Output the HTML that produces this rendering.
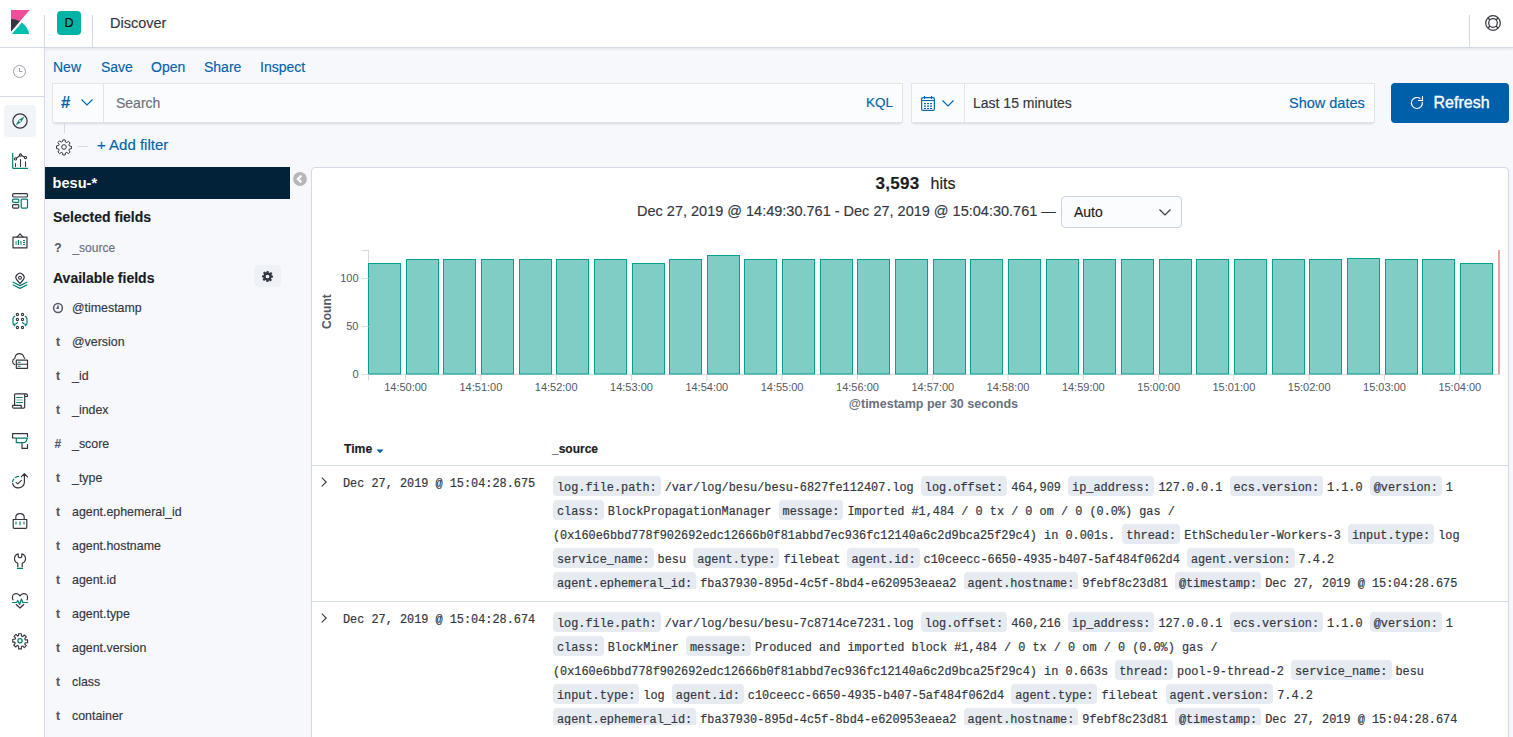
<!DOCTYPE html>
<html><head><meta charset="utf-8">
<style>
*{box-sizing:border-box;margin:0;padding:0}
html,body{width:1513px;height:737px;overflow:hidden}
body{position:relative;background:#F7F8FC;font-family:"Liberation Sans",sans-serif;color:#343741}
.a{position:absolute;white-space:nowrap}
.t{position:absolute;white-space:nowrap;line-height:20px;height:20px;-webkit-text-stroke-width:.15px}
.link{color:#0063AA}
svg{position:absolute;overflow:visible}
.mono{font-family:"Liberation Mono",monospace;font-size:11.87px;color:#343741;white-space:pre;-webkit-text-stroke:.2px #343741}
.src{height:112.7px;overflow:hidden;line-height:24px}
.ln{height:24px;white-space:pre}
.dt{background:#E6EBF2;border-radius:4px;padding:5px 4px 1px 4px;margin-right:4px}
</style></head><body>

<!-- HEADER -->
<div class="a" style="left:0;top:0;width:1513px;height:48px;background:#fff;border-bottom:1px solid #D3DAE6;box-shadow:0 1px 3px rgba(152,162,179,.25)"></div>
<svg style="left:8px;top:10px" width="24" height="24" viewBox="0 0 32 32"><path fill="#F04E98" d="M4 0v28.789L28.935.017z"/><path fill="#343741" d="M4 12v16.789l11.906-13.738A24.721 24.721 0 004 12"/><path fill="#00BFB3" d="M18.479 16.664L6.268 30.754l-1.073 1.237h23.191c-1.252-6.292-4.883-11.719-9.908-15.327"/></svg>
<div class="a" style="left:44px;top:15px;width:1px;height:33px;background:#D3DAE6"></div>
<div class="a" style="left:92px;top:15px;width:1px;height:33px;background:#D3DAE6"></div>
<div class="a" style="left:57px;top:11px;width:24px;height:24px;border-radius:4px;background:#00B3A4;color:#000;font-size:12.5px;line-height:24px;text-align:center;-webkit-text-stroke:.2px #000">D</div>
<div class="t" id="disc" style="left:110px;top:13px;font-size:14.5px;color:#343741">Discover</div>
<div class="a" style="left:1469px;top:15px;width:1px;height:33px;background:#D3DAE6"></div>
<svg style="left:1485px;top:15px" width="16" height="16" viewBox="0 0 16 16"><g fill="none" stroke="#343741" stroke-width="1.2"><circle cx="8" cy="8" r="7.3"/><circle cx="8" cy="8" r="4.3"/><path d="M3 3l2 2M13 3l-2 2M3 13l2-2M13 13l-2-2"/></g></svg>

<!-- LEFT NAV -->
<div class="a" style="left:0;top:48px;width:45px;height:689px;background:#fff;border-right:1px solid #D3DAE6"></div>
<svg style="left:13px;top:65px" width="13" height="13" viewBox="0 0 13 13"><g fill="none" stroke="#98A2B3" stroke-width="1"><circle cx="6.5" cy="6.5" r="6"/><path d="M6.5 3v3.5H9.5"/></g></svg>
<div class="a" style="left:0;top:96px;width:44px;height:1px;background:#D3DAE6"></div>
<div class="a" style="left:4px;top:105px;width:32px;height:32px;border-radius:4px;background:#F1F4F9"></div>
<svg style="left:12px;top:113px" width="16" height="16" viewBox="0 0 16 16"><g fill="none" stroke-width="1.1" stroke-linecap="round" stroke-linejoin="round"><circle cx="8" cy="8" r="7.1" stroke="#343741" stroke-width="1.25"/><path d="M11.6 4.4L8.9 8.9 4.4 11.6 7.1 7.1z" fill="#017D73" stroke="#017D73" stroke-width="0.6"/><circle cx="8" cy="8" r="0.95" fill="#F1F4F9" stroke="none"/></g></svg>
<svg style="left:12px;top:153px" width="16" height="16" viewBox="0 0 16 16"><g fill="none" stroke-width="1.1" stroke-linecap="round" stroke-linejoin="round"><path d="M0.7 0.3V14.4c0 .5.4.9.9.9H15.6" stroke="#017D73" stroke-width="1.2"/><path d="M3.5 10.5v3M8.5 6.5v7M13.5 8.7v4.8" stroke="#343741"/><path d="M4.4 5.2L7.6 2.7M9.5 2.5L12.5 4" stroke="#343741"/><circle cx="3.5" cy="5.9" r="1.1" stroke="#343741"/><circle cx="8.5" cy="2" r="1.1" stroke="#343741"/><circle cx="13.5" cy="4.6" r="1.1" stroke="#343741"/></g></svg>
<svg style="left:12px;top:193px" width="16" height="16" viewBox="0 0 16 16"><g fill="none" stroke-width="1.1" stroke-linecap="round" stroke-linejoin="round"><rect x="0.6" y="0.6" width="14.9" height="3.4" rx="1" stroke="#343741" stroke-width="1.2"/><rect x="0.6" y="6.1" width="6.2" height="3.3" rx="1" stroke="#017D73" stroke-width="1.2"/><rect x="0.6" y="11.6" width="6.2" height="3.5" rx="1" stroke="#343741" stroke-width="1.2"/><rect x="9.2" y="6.1" width="6.3" height="9" rx="1" stroke="#017D73" stroke-width="1.2"/></g></svg>
<svg style="left:12px;top:233px" width="16" height="16" viewBox="0 0 16 16"><g fill="none" stroke-width="1.1" stroke-linecap="round" stroke-linejoin="round"><path d="M1 4.1h14v10.8H1z" stroke="#343741" stroke-width="1.2"/><path d="M5 4.1L8 0.8l3 3.3" stroke="#343741" stroke-width="1.2"/><g fill="#017D73" stroke="none"><rect x="3.3" y="8" width="1.6" height="4" opacity=".55"/><rect x="5.8" y="6.9" width="1.2" height="5.1"/><rect x="8.1" y="8" width="1.7" height="4" opacity=".55"/><rect x="11" y="7" width="2" height="1"/><rect x="11" y="9" width="2" height="1"/><rect x="11" y="11" width="2" height="1"/></g></g></svg>
<svg style="left:12px;top:273px" width="16" height="16" viewBox="0 0 16 16"><g fill="none" stroke-width="1.1" stroke-linecap="round" stroke-linejoin="round"><path d="M8 10.6L5 7A4 4 0 1 1 11 7z" stroke="#343741" stroke-width="1.2"/><circle cx="8" cy="4.7" r="1.4" stroke="#343741" stroke-width="1.1"/><path d="M1.2 9.2L8 12.6l6.8-3.4M1.2 12L8 15.4l6.8-3.4" stroke="#017D73" stroke-width="1.2"/></g></svg>
<svg style="left:12px;top:313px" width="16" height="16" viewBox="0 0 16 16"><g fill="none" stroke-width="1.1" stroke-linecap="round" stroke-linejoin="round"><circle cx="5.4" cy="1.5" r="1.1" stroke="#343741" stroke-width="1.1"/><circle cx="5.4" cy="6.5" r="1.1" stroke="#343741" stroke-width="1.1"/><circle cx="5.4" cy="14.5" r="1.1" stroke="#343741" stroke-width="1.1"/><circle cx="10.5" cy="1.5" r="1.1" stroke="#343741" stroke-width="1.1"/><circle cx="10.5" cy="6.5" r="1.1" stroke="#343741" stroke-width="1.1"/><circle cx="10.5" cy="14.5" r="1.1" stroke="#343741" stroke-width="1.1"/><path d="M2.7 3.3C1.6 3.9 1 4.8 1 6v4.3c0 .8.5 1.1 1.2 1.1 1.5 0 2.7-.6 3.3-1.8M1.3 11.2l1.4 1.3M13.3 3.3c1.1.6 1.7 1.5 1.7 2.7v4.3c0 .8-.5 1.1-1.2 1.1-1.5 0-2.7-.6-3.3-1.8M14.7 11.2l-1.4 1.3" stroke="#017D73" stroke-width="1.2"/></g></svg>
<svg style="left:12px;top:353px" width="16" height="16" viewBox="0 0 16 16"><g fill="none" stroke-width="1.1" stroke-linecap="round" stroke-linejoin="round"><path d="M2.7 11.6C1.4 11 .6 9.9 .6 8.5c0-1.5 1-2.6 2.2-3C3.1 2.7 5.1.6 7.6.6c2 0 3.6 1.3 4.2 3.2.2.6.5 1.1.9 1.6" stroke="#343741"/><rect x="4.3" y="7.2" width="11.2" height="8.2" rx=".4" stroke="#343741" stroke-width="1.2"/><path d="M4.3 11.3h11.2" stroke="#343741"/><path d="M6.2 9.3h2M6.2 13.3h2" stroke="#017D73" stroke-width="1.1"/></g></svg>
<svg style="left:12px;top:393px" width="16" height="16" viewBox="0 0 16 16"><g fill="none" stroke-width="1.1" stroke-linecap="round" stroke-linejoin="round"><path d="M2.6 12.3V2c0-.6.4-1.1 1-1.1h10.6c.7 0 1.2.5 1.2 1.1v1.5h-2.7M12.7 1v13c0 .7-.5 1.2-1.1 1.2H1.7c-.6 0-1.1-.5-1.1-1.1v-1.7h8.6v2.8" stroke="#343741" stroke-width="1.2"/><path d="M4.6 4.5h5.8M4.6 9.5h5.8" stroke="#017D73" stroke-width="1"/><path d="M4.6 7h5.8" stroke="#017D73" stroke-width="1" opacity=".55"/></g></svg>
<svg style="left:12px;top:433px" width="16" height="16" viewBox="0 0 16 16"><g fill="none" stroke-width="1.1" stroke-linecap="round" stroke-linejoin="round"><path d="M3.8 5H.6V.6h14.9v3" stroke="#343741" stroke-width="1.2"/><path d="M4.3 5.2h11.1l-1.1 2.9c-.5 1-1.5 1.6-2.6 1.6H4.3z" stroke="#017D73" stroke-width="1.2"/><path d="M10 10.6v4.8h5.5v-3.7" stroke="#343741" stroke-width="1.2"/></g></svg>
<svg style="left:12px;top:473px" width="16" height="16" viewBox="0 0 16 16"><g fill="none" stroke-width="1.1" stroke-linecap="round" stroke-linejoin="round"><path d="M.6 10.3A6 6 0 0 0 12.4 9.3V.8M9.3 3.8l3.1-3.1 3.1 3.1" stroke="#343741" stroke-width="1.2"/><path d="M4.1 9.3l1.7 1.6 3.6-3.5" stroke="#343741"/><path d="M3.3 4.4C4.3 3.7 5.5 3.4 6.7 3.3M.6 8.6C.8 7.6 1.2 6.8 1.8 6.1" stroke="#017D73" stroke-width="1.2"/></g></svg>
<svg style="left:12px;top:513px" width="16" height="16" viewBox="0 0 16 16"><g fill="none" stroke-width="1.1" stroke-linecap="round" stroke-linejoin="round"><path d="M3.8 5.5V4.3C3.8 2.1 5.7.6 8 .6s4.2 1.5 4.2 3.7v1.2" stroke="#343741" stroke-width="1.2"/><path d="M1.2 6.5h13.6v7.8c0 .6-.4 1-1 1H2.2c-.6 0-1-.4-1-1z" stroke="#343741" stroke-width="1.2"/><path d="M4 9v1.8M12 9v1.8" stroke="#017D73" stroke-width="1.2"/><path d="M8 9.2v2.2" stroke="#017D73" stroke-width="2" opacity=".6"/></g></svg>
<svg style="left:12px;top:553px" width="16" height="16" viewBox="0 0 16 16"><g fill="none" stroke-width="1.1" stroke-linecap="round" stroke-linejoin="round"><path d="M6.2.9C4 1.5 2.5 3.4 2.5 5.7c0 2 1.2 3.7 3.3 4.5v3.6M9.8.9C12 1.5 13.5 3.4 13.5 5.7c0 2-1.2 3.7-3.3 4.5v3.6M6.2.9v2.4c0 .8.6 1.4 1.4 1.4h.8c.8 0 1.4-.6 1.4-1.4V.9" stroke="#343741" stroke-width="1.2"/><path d="M5.4 15.4h5.2" stroke="#017D73" stroke-width="1.2"/></g></svg>
<svg style="left:12px;top:593px" width="16" height="16" viewBox="0 0 16 16"><g fill="none" stroke-width="1.1" stroke-linecap="round" stroke-linejoin="round"><path d="M1 6.8C.5 6 .4 5.2.4 4.5.4 2.3 2.1.6 4.2.6c1.6 0 3 .9 3.8 2.3C8.8 1.5 10.2.6 11.8.6c2.1 0 3.8 1.7 3.8 3.9 0 .7-.1 1.5-.6 2.3M4.3 11.5L8 15l3.7-3.5" stroke="#343741" stroke-width="1.2"/><path d="M.4 9.5h4.2l1.2-2 1.8 4 1.7-5.4 1.5 3.4h4.8" stroke="#017D73" stroke-width="1.2"/></g></svg>
<svg style="left:12px;top:633px" width="16" height="16" viewBox="0 0 16 16"><g fill="none" stroke-width="1.1" stroke-linecap="round" stroke-linejoin="round"><path d="M6.6.7h2.8v2.3l1.3.6 1.6-1.6 2 2-1.6 1.6.6 1.3h2.3v2.8h-2.3l-.6 1.3 1.6 1.6-2 2-1.6-1.6-1.3.6v2.3H6.6V13l-1.3-.6-1.6 1.6-2-2 1.6-1.6-.6-1.3H.7V6.3H3l.6-1.3L2 3.4l2-2 1.6 1.6 1-.4z" stroke="#343741" stroke-width="1.1"/><circle cx="8" cy="7.7" r="2.1" stroke="#017D73" stroke-width="1.3"/></g></svg>

<!-- TOP MENU -->
<div class="t link" style="left:53px;top:57px;font-size:14px">New</div>
<div class="t link" style="left:101px;top:57px;font-size:14px">Save</div>
<div class="t link" style="left:151px;top:57px;font-size:14px">Open</div>
<div class="t link" style="left:204px;top:57px;font-size:14px">Share</div>
<div class="t link" style="left:260px;top:57px;font-size:14px">Inspect</div>

<!-- QUERY BAR -->
<div class="a" style="left:52px;top:83px;width:851px;height:40px;background:#FBFCFD;box-shadow:inset 0 0 0 1px rgba(16,22,26,.1),0 1px 1px -1px rgba(152,162,179,.3),0 3px 2px -2px rgba(152,162,179,.3)"></div>
<div class="a" style="left:103px;top:84px;width:1px;height:38px;background:rgba(16,22,26,.1)"></div>
<div class="t link" style="left:61px;top:92.1px;font-size:16.5px;font-weight:bold">#</div>
<svg style="left:81px;top:99px" width="12" height="7" viewBox="0 0 12 7"><path d="M0.5 0.5L6 6L11.5 0.5" fill="none" stroke="#006BB4" stroke-width="1.2"/></svg>
<div class="t" style="left:116px;top:93px;font-size:14px;color:#69707D">Search</div>
<div class="t link" style="left:866px;top:93px;font-size:13.5px">KQL</div>

<!-- DATE PICKER -->
<div class="a" style="left:911px;top:83px;width:464px;height:40px;background:#FBFCFD;box-shadow:inset 0 0 0 1px rgba(16,22,26,.1),0 1px 1px -1px rgba(152,162,179,.3),0 3px 2px -2px rgba(152,162,179,.3)"></div>
<div class="a" style="left:964px;top:84px;width:1px;height:38px;background:rgba(16,22,26,.1)"></div>
<svg style="left:921px;top:96px" width="14" height="15" viewBox="0 0 14 15"><g fill="none" stroke="#006BB4" stroke-width="1.2"><rect x="0.6" y="1.6" width="12.8" height="12.8" rx="1.5"/><path d="M3.5 0v3M10.5 0v3M0.6 4.5h12.8"/></g><g fill="#006BB4"><rect x="3" y="7" width="2" height="1.2"/><rect x="6" y="7" width="2" height="1.2"/><rect x="9" y="7" width="2" height="1.2"/><rect x="3" y="9.5" width="2" height="1.2"/><rect x="6" y="9.5" width="2" height="1.2"/><rect x="9" y="9.5" width="2" height="1.2"/><rect x="3" y="12" width="2" height="1"/><rect x="6" y="12" width="2" height="1"/><rect x="9" y="12" width="2" height="1"/></g></svg>
<svg style="left:942px;top:100px" width="12" height="7" viewBox="0 0 12 7"><path d="M0.5 0.5L6 6L11.5 0.5" fill="none" stroke="#006BB4" stroke-width="1.2"/></svg>
<div class="t" style="left:973px;top:93px;font-size:14px;color:#343741">Last 15 minutes</div>
<div class="t link" style="left:1289px;top:93px;font-size:14.5px">Show dates</div>

<!-- REFRESH -->
<div class="a" style="left:1391px;top:83px;width:118px;height:40px;border-radius:4px;background:#005FA9"></div>
<svg style="left:1411px;top:96px" width="13" height="13" viewBox="0 0 13 13"><g fill="none" stroke="#fff" stroke-width="1.15"><path d="M9.44 2.79A5.5 5.5 0 1 0 11.28 5.86"/><path d="M11.5 0v4.5H7"/></g></svg>
<div class="t" style="left:1433.5px;top:92.5px;font-size:16px;color:#fff;-webkit-text-stroke:.35px #fff">Refresh</div>

<!-- FILTER ROW -->
<div class="a" style="left:64px;top:123px;width:1px;height:10px;background:#D3DAE6"></div>
<svg style="left:56px;top:139px" width="16" height="16" viewBox="0 0 16 16"><path fill="none" stroke="#343741" stroke-width="1" d="M6.9 0.9h2.2l.4 2.1 1.2.6 1.8-1.2 1.6 1.6-1.2 1.8.5 1.2 2.1.4v2.2l-2.1.4-.5 1.2 1.2 1.8-1.6 1.6-1.8-1.2-1.2.5-.4 2.1H6.9l-.4-2.1-1.2-.5-1.8 1.2-1.6-1.6 1.2-1.8-.5-1.2-2.1-.4V6.9l2.1-.4.5-1.2-1.2-1.8 1.6-1.6 1.8 1.2 1.2-.6z"/><circle cx="8" cy="8" r="2.3" fill="none" stroke="#343741" stroke-width="1"/></svg>
<div class="a" style="left:78px;top:146px;width:10px;height:1px;background:#D3DAE6"></div>
<div class="t link" style="left:97px;top:135px;font-size:15px">+ Add filter</div>

<div class="a" style="left:45px;top:167px;width:245px;height:32px;background:#012238"></div>
<div class="t" style="left:52.5px;top:172.8px;font-size:14.6px;font-weight:bold;color:#fff;-webkit-text-stroke-width:0">besu-*</div>
<svg style="left:293px;top:172px" width="14" height="14" viewBox="0 0 14 14"><circle cx="7" cy="7" r="6.9" fill="#B7B7B7"/><path d="M8.3 3.6L4.9 7l3.4 3.4" fill="none" stroke="#fff" stroke-width="2.2"/></svg>
<div class="t" style="left:53px;top:207px;font-size:14px;font-weight:bold;color:#1a1c21">Selected fields</div>
<div class="t" style="left:54.3px;top:238px;font-size:12px;font-weight:bold;color:#535966">?</div>
<div class="t" style="left:72.4px;top:238px;font-size:12px;color:#69707D">_source</div>
<div class="t" style="left:53px;top:267.5px;font-size:14px;font-weight:bold;color:#1a1c21">Available fields</div>
<div class="a" style="left:254px;top:265px;width:27px;height:22px;border-radius:4px;background:#EEF1F5"></div>
<svg style="left:262px;top:271px" width="11" height="11" viewBox="0 0 16 16"><path fill="#343741" d="M6.5 0h3l.4 2.3 1.3.6L13.1 1.5l2.1 2.1-1.4 1.9.6 1.3L16 6.5v3l-2.3.4-.6 1.3 1.4 1.9-2.1 2.1-1.9-1.4-1.3.6L9.5 16h-3l-.4-2.3-1.3-.6-1.9 1.4L.8 12.4l1.4-1.9-.6-1.3L0 9.5v-3l2.3-.4.6-1.3L1.5 2.9 3.6.8l1.9 1.4 1.3-.6zM8 5.3A2.7 2.7 0 1 0 8 10.7 2.7 2.7 0 1 0 8 5.3z"/></svg>
<svg style="left:53px;top:302.5px" width="10" height="10" viewBox="0 0 10 10"><g fill="none" stroke="#535966" stroke-width="1.5"><circle cx="5" cy="5" r="4.4"/><path d="M5 2.4V5.3H3.4"/></g></svg>
<div class="t" style="left:72px;top:297.70px;font-size:12.4px;color:#343741">@timestamp</div>
<div class="t" style="left:56px;top:331.84px;font-size:12px;font-weight:bold;color:#535966">t</div>
<div class="t" style="left:72px;top:331.70px;font-size:12.4px;color:#343741">@version</div>
<div class="t" style="left:56px;top:365.84px;font-size:12px;font-weight:bold;color:#535966">t</div>
<div class="t" style="left:72px;top:365.70px;font-size:12.4px;color:#343741">_id</div>
<div class="t" style="left:56px;top:399.84px;font-size:12px;font-weight:bold;color:#535966">t</div>
<div class="t" style="left:72px;top:399.70px;font-size:12.4px;color:#343741">_index</div>
<div class="t" style="left:54.5px;top:433.84px;font-size:12px;font-weight:bold;color:#535966">#</div>
<div class="t" style="left:72px;top:433.70px;font-size:12.4px;color:#343741">_score</div>
<div class="t" style="left:56px;top:467.84px;font-size:12px;font-weight:bold;color:#535966">t</div>
<div class="t" style="left:72px;top:467.70px;font-size:12.4px;color:#343741">_type</div>
<div class="t" style="left:56px;top:501.84px;font-size:12px;font-weight:bold;color:#535966">t</div>
<div class="t" style="left:72px;top:501.70px;font-size:12.4px;color:#343741">agent.ephemeral_id</div>
<div class="t" style="left:56px;top:535.84px;font-size:12px;font-weight:bold;color:#535966">t</div>
<div class="t" style="left:72px;top:535.70px;font-size:12.4px;color:#343741">agent.hostname</div>
<div class="t" style="left:56px;top:569.84px;font-size:12px;font-weight:bold;color:#535966">t</div>
<div class="t" style="left:72px;top:569.70px;font-size:12.4px;color:#343741">agent.id</div>
<div class="t" style="left:56px;top:603.84px;font-size:12px;font-weight:bold;color:#535966">t</div>
<div class="t" style="left:72px;top:603.70px;font-size:12.4px;color:#343741">agent.type</div>
<div class="t" style="left:56px;top:637.84px;font-size:12px;font-weight:bold;color:#535966">t</div>
<div class="t" style="left:72px;top:637.70px;font-size:12.4px;color:#343741">agent.version</div>
<div class="t" style="left:56px;top:671.84px;font-size:12px;font-weight:bold;color:#535966">t</div>
<div class="t" style="left:72px;top:671.70px;font-size:12.4px;color:#343741">class</div>
<div class="t" style="left:56px;top:705.84px;font-size:12px;font-weight:bold;color:#535966">t</div>
<div class="t" style="left:72px;top:705.70px;font-size:12.4px;color:#343741">container</div>
<div class="a" style="left:311px;top:167px;width:1198px;height:640px;background:#fff;border:1px solid #D3DAE6;border-radius:4px;box-shadow:0 1px 2px -1px rgba(152,162,179,.3),0 3px 3px -2px rgba(152,162,179,.2)"></div>
<div class="t" style="left:875.5px;top:173.8px;font-size:17px;font-weight:bold;color:#1a1c21;letter-spacing:.3px">3,593</div>
<div class="t" style="left:930.5px;top:174.2px;font-size:16px;color:#1a1c21">hits</div>
<div class="t" style="left:637px;top:201px;font-size:14.5px;color:#343741">Dec 27, 2019 @ 14:49:30.761 - Dec 27, 2019 @ 15:04:30.761 —</div>
<div class="a" style="left:1061px;top:196px;width:121px;height:32px;border-radius:4px;background:#FBFCFD;border:1px solid #CBD3DF"></div>
<div class="t" style="left:1074px;top:202px;font-size:14px;color:#1a1c21">Auto</div>
<svg style="left:1159px;top:209px" width="12" height="7" viewBox="0 0 12 7"><path d="M0.5 0.5L6 6L11.5 0.5" fill="none" stroke="#343741" stroke-width="1.2"/></svg>
<svg style="left:0;top:0" width="1513" height="737" viewBox="0 0 1513 737">
<path d="M368.5 250V374.5H1500" fill="none" stroke="#D9D9D9" stroke-width="1"/>
<rect x="368.5" y="263.5" width="32" height="110.5" fill="#80CDC5" stroke="#04A193" stroke-width="1"/>
<rect x="406.5" y="259.5" width="32" height="114.5" fill="#80CDC5" stroke="#04A193" stroke-width="1"/>
<rect x="443.5" y="259.5" width="32" height="114.5" fill="#80CDC5" stroke="#04A193" stroke-width="1"/>
<rect x="481.5" y="259.5" width="32" height="114.5" fill="#80CDC5" stroke="#04A193" stroke-width="1"/>
<rect x="519.5" y="259.5" width="32" height="114.5" fill="#80CDC5" stroke="#04A193" stroke-width="1"/>
<rect x="556.5" y="259.5" width="32" height="114.5" fill="#80CDC5" stroke="#04A193" stroke-width="1"/>
<rect x="594.5" y="259.5" width="32" height="114.5" fill="#80CDC5" stroke="#04A193" stroke-width="1"/>
<rect x="632.5" y="263.5" width="32" height="110.5" fill="#80CDC5" stroke="#04A193" stroke-width="1"/>
<rect x="669.5" y="259.5" width="32" height="114.5" fill="#80CDC5" stroke="#04A193" stroke-width="1"/>
<rect x="707.5" y="255.5" width="32" height="118.5" fill="#80CDC5" stroke="#04A193" stroke-width="1"/>
<rect x="744.5" y="259.5" width="32" height="114.5" fill="#80CDC5" stroke="#04A193" stroke-width="1"/>
<rect x="782.5" y="259.5" width="32" height="114.5" fill="#80CDC5" stroke="#04A193" stroke-width="1"/>
<rect x="820.5" y="259.5" width="32" height="114.5" fill="#80CDC5" stroke="#04A193" stroke-width="1"/>
<rect x="857.5" y="259.5" width="32" height="114.5" fill="#80CDC5" stroke="#04A193" stroke-width="1"/>
<rect x="895.5" y="259.5" width="32" height="114.5" fill="#80CDC5" stroke="#04A193" stroke-width="1"/>
<rect x="933.5" y="259.5" width="32" height="114.5" fill="#80CDC5" stroke="#04A193" stroke-width="1"/>
<rect x="970.5" y="259.5" width="32" height="114.5" fill="#80CDC5" stroke="#04A193" stroke-width="1"/>
<rect x="1008.5" y="259.5" width="32" height="114.5" fill="#80CDC5" stroke="#04A193" stroke-width="1"/>
<rect x="1046.5" y="259.5" width="32" height="114.5" fill="#80CDC5" stroke="#04A193" stroke-width="1"/>
<rect x="1083.5" y="259.5" width="32" height="114.5" fill="#80CDC5" stroke="#04A193" stroke-width="1"/>
<rect x="1121.5" y="259.5" width="32" height="114.5" fill="#80CDC5" stroke="#04A193" stroke-width="1"/>
<rect x="1159.5" y="259.5" width="32" height="114.5" fill="#80CDC5" stroke="#04A193" stroke-width="1"/>
<rect x="1196.5" y="259.5" width="32" height="114.5" fill="#80CDC5" stroke="#04A193" stroke-width="1"/>
<rect x="1234.5" y="259.5" width="32" height="114.5" fill="#80CDC5" stroke="#04A193" stroke-width="1"/>
<rect x="1272.5" y="259.5" width="32" height="114.5" fill="#80CDC5" stroke="#04A193" stroke-width="1"/>
<rect x="1309.5" y="259.5" width="32" height="114.5" fill="#80CDC5" stroke="#04A193" stroke-width="1"/>
<rect x="1347.5" y="258.5" width="32" height="115.5" fill="#80CDC5" stroke="#04A193" stroke-width="1"/>
<rect x="1385.5" y="259.5" width="32" height="114.5" fill="#80CDC5" stroke="#04A193" stroke-width="1"/>
<rect x="1422.5" y="259.5" width="32" height="114.5" fill="#80CDC5" stroke="#04A193" stroke-width="1"/>
<rect x="1460.5" y="263.5" width="32" height="110.5" fill="#80CDC5" stroke="#04A193" stroke-width="1"/>
<path d="M362 250.5H368.5" stroke="#D9D9D9" stroke-width="1"/>
<path d="M362 278.5H368.5" stroke="#D9D9D9" stroke-width="1"/>
<text x="358.5" y="282.4" text-anchor="end" font-family="Liberation Sans" font-size="11" fill="#535966">100</text>
<path d="M362 326.5H368.5" stroke="#D9D9D9" stroke-width="1"/>
<text x="358.5" y="330.4" text-anchor="end" font-family="Liberation Sans" font-size="11" fill="#535966">50</text>
<path d="M362 374.5H368.5" stroke="#D9D9D9" stroke-width="1"/>
<text x="358.5" y="378.4" text-anchor="end" font-family="Liberation Sans" font-size="11" fill="#535966">0</text>
<path d="M368.5 374.5V380.5" stroke="#D9D9D9"/>
<path d="M405.6 374.5V380.5" stroke="#D9D9D9"/>
<text x="405.6" y="391" text-anchor="middle" font-family="Liberation Sans" font-size="11" fill="#535966">14:50:00</text>
<path d="M480.9 374.5V380.5" stroke="#D9D9D9"/>
<text x="480.9" y="391" text-anchor="middle" font-family="Liberation Sans" font-size="11" fill="#535966">14:51:00</text>
<path d="M556.2 374.5V380.5" stroke="#D9D9D9"/>
<text x="556.2" y="391" text-anchor="middle" font-family="Liberation Sans" font-size="11" fill="#535966">14:52:00</text>
<path d="M631.5 374.5V380.5" stroke="#D9D9D9"/>
<text x="631.5" y="391" text-anchor="middle" font-family="Liberation Sans" font-size="11" fill="#535966">14:53:00</text>
<path d="M706.8 374.5V380.5" stroke="#D9D9D9"/>
<text x="706.8" y="391" text-anchor="middle" font-family="Liberation Sans" font-size="11" fill="#535966">14:54:00</text>
<path d="M782.1 374.5V380.5" stroke="#D9D9D9"/>
<text x="782.1" y="391" text-anchor="middle" font-family="Liberation Sans" font-size="11" fill="#535966">14:55:00</text>
<path d="M857.5 374.5V380.5" stroke="#D9D9D9"/>
<text x="857.5" y="391" text-anchor="middle" font-family="Liberation Sans" font-size="11" fill="#535966">14:56:00</text>
<path d="M932.8 374.5V380.5" stroke="#D9D9D9"/>
<text x="932.8" y="391" text-anchor="middle" font-family="Liberation Sans" font-size="11" fill="#535966">14:57:00</text>
<path d="M1008.0 374.5V380.5" stroke="#D9D9D9"/>
<text x="1008.0" y="391" text-anchor="middle" font-family="Liberation Sans" font-size="11" fill="#535966">14:58:00</text>
<path d="M1083.3 374.5V380.5" stroke="#D9D9D9"/>
<text x="1083.3" y="391" text-anchor="middle" font-family="Liberation Sans" font-size="11" fill="#535966">14:59:00</text>
<path d="M1158.7 374.5V380.5" stroke="#D9D9D9"/>
<text x="1158.7" y="391" text-anchor="middle" font-family="Liberation Sans" font-size="11" fill="#535966">15:00:00</text>
<path d="M1233.9 374.5V380.5" stroke="#D9D9D9"/>
<text x="1233.9" y="391" text-anchor="middle" font-family="Liberation Sans" font-size="11" fill="#535966">15:01:00</text>
<path d="M1309.2 374.5V380.5" stroke="#D9D9D9"/>
<text x="1309.2" y="391" text-anchor="middle" font-family="Liberation Sans" font-size="11" fill="#535966">15:02:00</text>
<path d="M1384.5 374.5V380.5" stroke="#D9D9D9"/>
<text x="1384.5" y="391" text-anchor="middle" font-family="Liberation Sans" font-size="11" fill="#535966">15:03:00</text>
<path d="M1459.8 374.5V380.5" stroke="#D9D9D9"/>
<text x="1459.8" y="391" text-anchor="middle" font-family="Liberation Sans" font-size="11" fill="#535966">15:04:00</text>
<rect x="1498" y="250" width="2" height="124" fill="#EBA3A6"/>
<text transform="translate(330.5 311.6) rotate(-90)" text-anchor="middle" font-family="Liberation Sans" font-size="12" font-weight="bold" fill="#535966">Count</text>
<text x="933.4" y="408.3" text-anchor="middle" font-family="Liberation Sans" font-size="12.5" font-weight="bold" fill="#69707D">@timestamp per 30 seconds</text>
</svg>
<div class="t" style="left:344px;top:438.7px;font-size:12.2px;font-weight:bold;color:#1a1c21">Time</div>
<svg style="left:376px;top:449px" width="8" height="5" viewBox="0 0 8 5"><path d="M0.5 0.5h7L4 4.3z" fill="#005FA9"/></svg>
<div class="t" style="left:552px;top:438.8px;font-size:12px;font-weight:bold;color:#1a1c21">_source</div>
<div class="a" style="left:312px;top:465px;width:1196px;height:1px;background:#D3DAE6"></div>
<div class="a" style="left:312px;top:601px;width:1196px;height:1px;background:#D3DAE6"></div>
<svg style="left:321px;top:477px" width="6" height="10" viewBox="0 0 6 10"><path d="M0.8 0.6L5.2 5L0.8 9.4" fill="none" stroke="#343741" stroke-width="1.1"/></svg>
<div class="a mono" style="left:343px;top:471.83px;line-height:24px">Dec 27, 2019 @ 15:04:28.675</div>
<div class="a mono src" style="left:553px;top:476px"><div class="ln"><span class="dt">log.file.path:</span><span class="dd">/var/log/besu/besu-6827fe112407.log</span> <span class="dt">log.offset:</span><span class="dd">464,909</span> <span class="dt">ip_address:</span><span class="dd">127.0.0.1</span> <span class="dt">ecs.version:</span><span class="dd">1.1.0</span> <span class="dt">@version:</span><span class="dd">1</span></div><div class="ln"><span class="dt">class:</span><span class="dd">BlockPropagationManager</span> <span class="dt">message:</span><span class="dd">Imported #1,484 / 0 tx / 0 om / 0 (0.0%) gas /</span></div><div class="ln"><span class="dd">(0x160e6bbd778f902692edc12666b0f81abbd7ec936fc12140a6c2d9bca25f29c4) in 0.001s.</span> <span class="dt">thread:</span><span class="dd">EthScheduler-Workers-3</span> <span class="dt">input.type:</span><span class="dd">log</span></div><div class="ln"><span class="dt">service_name:</span><span class="dd">besu</span> <span class="dt">agent.type:</span><span class="dd">filebeat</span> <span class="dt">agent.id:</span><span class="dd">c10ceecc-6650-4935-b407-5af484f062d4</span> <span class="dt">agent.version:</span><span class="dd">7.4.2</span></div><div class="ln"><span class="dt">agent.ephemeral_id:</span><span class="dd">fba37930-895d-4c5f-8bd4-e620953eaea2</span> <span class="dt">agent.hostname:</span><span class="dd">9febf8c23d81</span> <span class="dt">@timestamp:</span><span class="dd">Dec 27, 2019 @ 15:04:28.675</span></div></div>
<svg style="left:321px;top:613px" width="6" height="10" viewBox="0 0 6 10"><path d="M0.8 0.6L5.2 5L0.8 9.4" fill="none" stroke="#343741" stroke-width="1.1"/></svg>
<div class="a mono" style="left:343px;top:607.83px;line-height:24px">Dec 27, 2019 @ 15:04:28.674</div>
<div class="a mono src" style="left:553px;top:612px"><div class="ln"><span class="dt">log.file.path:</span><span class="dd">/var/log/besu/besu-7c8714ce7231.log</span> <span class="dt">log.offset:</span><span class="dd">460,216</span> <span class="dt">ip_address:</span><span class="dd">127.0.0.1</span> <span class="dt">ecs.version:</span><span class="dd">1.1.0</span> <span class="dt">@version:</span><span class="dd">1</span></div><div class="ln"><span class="dt">class:</span><span class="dd">BlockMiner</span> <span class="dt">message:</span><span class="dd">Produced and imported block #1,484 / 0 tx / 0 om / 0 (0.0%) gas /</span></div><div class="ln"><span class="dd">(0x160e6bbd778f902692edc12666b0f81abbd7ec936fc12140a6c2d9bca25f29c4) in 0.663s</span> <span class="dt">thread:</span><span class="dd">pool-9-thread-2</span> <span class="dt">service_name:</span><span class="dd">besu</span></div><div class="ln"><span class="dt">input.type:</span><span class="dd">log</span> <span class="dt">agent.id:</span><span class="dd">c10ceecc-6650-4935-b407-5af484f062d4</span> <span class="dt">agent.type:</span><span class="dd">filebeat</span> <span class="dt">agent.version:</span><span class="dd">7.4.2</span></div><div class="ln"><span class="dt">agent.ephemeral_id:</span><span class="dd">fba37930-895d-4c5f-8bd4-e620953eaea2</span> <span class="dt">agent.hostname:</span><span class="dd">9febf8c23d81</span> <span class="dt">@timestamp:</span><span class="dd">Dec 27, 2019 @ 15:04:28.674</span></div></div>

</body></html>
